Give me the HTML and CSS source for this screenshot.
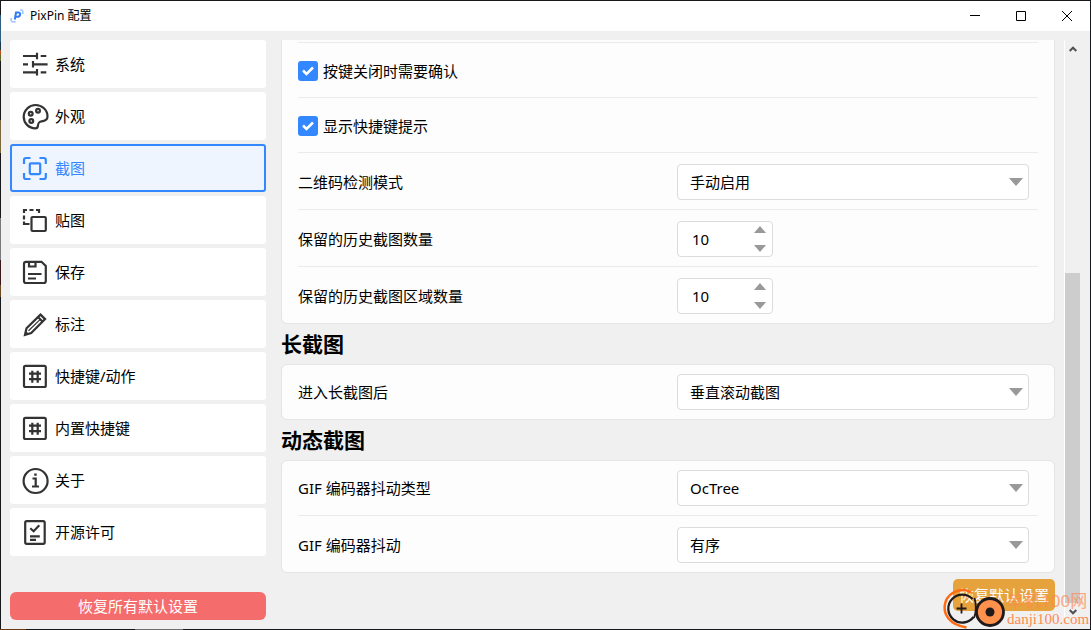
FILE: index.html
```html
<!DOCTYPE html>
<html lang="zh-CN">
<head>
<meta charset="utf-8">
<title>PixPin 配置</title>
<link rel="stylesheet" href="styles.css">
</head>
<body>
<div class="window">
  <header class="titlebar">
    <svg class="app-icon" viewBox="0 0 14 14" aria-hidden="true">
      <path d="M10 1.200h1.300q1.500 0 1.500 1.500v2.300M1.200 9v2.300q0 1.500 1.500 1.500h3" fill="none" stroke="#a9cbff" stroke-width="1.800"/>
      <path d="M4.800 10.500L6 3.500h2.200q2.300 0 1.900 2.200-.4 2-2.700 2H5.400" fill="none" stroke="#2f7df6" stroke-width="2"/>
    </svg>
    <span class="title">PixPin 配置</span>
    <div class="window-buttons">
      <button class="window-button" type="button" aria-label="最小化"><svg viewBox="0 0 12 12"><path d="M1 5.500h10"/></svg></button>
      <button class="window-button" type="button" aria-label="最大化"><svg viewBox="0 0 12 12"><path d="M1.500 1.500h9v9h-9z"/></svg></button>
      <button class="window-button" type="button" aria-label="关闭"><svg viewBox="0 0 12 12"><path d="M1 1l10 10M11 1L1 11"/></svg></button>
    </div>
  </header>

  <div class="body">
    <aside class="sidebar">
      <nav class="nav">
        <button class="nav-item" type="button">
          <svg class="icon" viewBox="0 0 24 24"><path d="M0 4h14M14 .7v6.600M17.700 4h5.600M0 12.300h5M10 9v6.600M10 12.300h14.600M0 20.300h14M14 17v6.600M17.700 20.300h5.600"/></svg>
          <span>系统</span>
        </button>
        <button class="nav-item" type="button">
          <svg class="icon" viewBox="0 0 24 24"><path d="M24.500 12.500C24.500 6 19 1 12.600 1S.7 6.300.7 12.700s5 11.600 11.700 11.600c1.800 0 2.300-.8 2.500-2.300.3-3.300.9-4.300 3.800-4.700 3.300-.4 5.800-1.200 5.800-4.800z"/><circle cx="7.700" cy="9.700" r="1.900"/><circle cx="15" cy="6.800" r="1.900"/><circle cx="8.300" cy="17" r="1.900"/></svg>
          <span>外观</span>
        </button>
        <button class="nav-item selected" type="button" aria-current="page">
          <svg class="icon" viewBox="0 0 24 24"><path d="M1 8V4q0-2 2-2h4.500M16.500 2h4.300q2 0 2 2v4M1 17v4q0 2 2 2h4.500M16.500 23h4.300q2 0 2-2v-4"/><rect x="6.800" y="7.300" width="10.400" height="10.800" rx="1"/></svg>
          <span>截图</span>
        </button>
        <button class="nav-item" type="button">
          <svg class="icon" viewBox="0 0 24 24"><path d="M1 5V2h3M6.500 2h4M13 2h3v3M1 7.500v4M1 13.500V16h5.500"/><rect x="8.500" y="9" width="14.300" height="14" rx="1"/></svg>
          <span>贴图</span>
        </button>
        <button class="nav-item" type="button">
          <svg class="icon" viewBox="0 0 24 24"><path d="M3 1.800h15.500l4.300 4.200v15q0 2-2 2H3q-2 0-2-2V3.800q0-2 2-2zM6 2v4.500h6.500V2M5 14h13.500M5 18.500h8"/></svg>
          <span>保存</span>
        </button>
        <button class="nav-item" type="button">
          <svg class="icon" viewBox="0 0 24 24"><path d="M2 22.800l1.500-6.500L17.500 2.600l4.600 4.500L8.200 21zM15 5l4.700 4.700"/><path class="thin" d="M5.500 18.800L17.300 7.400M3 20l2 2"/></svg>
          <span>标注</span>
        </button>
        <button class="nav-item" type="button">
          <svg class="icon" viewBox="0 0 24 24"><rect x="1" y="1.800" width="21.800" height="21.200" rx="1.500"/><path d="M9.300 6.700v12M14.700 6.700v12M6 9.700h12M6 15.200h12"/></svg>
          <span>快捷键/动作</span>
        </button>
        <button class="nav-item" type="button">
          <svg class="icon" viewBox="0 0 24 24"><rect x="1" y="1.800" width="21.800" height="21.200" rx="1.500"/><path d="M9.300 6.700v12M14.700 6.700v12M6 9.700h12M6 15.200h12"/></svg>
          <span>内置快捷键</span>
        </button>
        <button class="nav-item" type="button">
          <svg class="icon" viewBox="0 0 24 24"><circle cx="12.600" cy="13" r="12"/><path d="M9.500 10.500h3.200v8M9 18.500h7M11.200 6.700h2.500"/></svg>
          <span>关于</span>
        </button>
        <button class="nav-item" type="button">
          <svg class="icon" viewBox="0 0 24 24"><rect x="2.200" y="1.200" width="19.500" height="22.600" rx="1.500"/><path d="M7.300 8.300l3.300 3 5.700-6M7 16.300h9.800M7 19.800h6"/></svg>
          <span>开源许可</span>
        </button>
      </nav>
      <button class="reset-all" type="button">恢复所有默认设置</button>
    </aside>

    <main class="content">
      <section class="card card-continued">
        <div class="row">
          <label class="check"><input type="checkbox" checked><span>按键关闭时需要确认</span></label>
        </div>
        <div class="row">
          <label class="check"><input type="checkbox" checked><span>显示快捷键提示</span></label>
        </div>
        <div class="row">
          <label for="qr-mode">二维码检测模式</label>
          <select id="qr-mode"><option>手动启用</option></select>
        </div>
        <div class="row">
          <label for="history-count">保留的历史截图数量</label>
          <div class="spinner">
            <input id="history-count" type="number" value="10">
            <div class="steps">
              <button class="step up" type="button" aria-label="增加"></button>
              <button class="step down" type="button" aria-label="减少"></button>
            </div>
          </div>
        </div>
        <div class="row">
          <label for="region-count">保留的历史截图区域数量</label>
          <div class="spinner">
            <input id="region-count" type="number" value="10">
            <div class="steps">
              <button class="step up" type="button" aria-label="增加"></button>
              <button class="step down" type="button" aria-label="减少"></button>
            </div>
          </div>
        </div>
      </section>

      <h2>长截图</h2>
      <section class="card">
        <div class="row">
          <label for="long-mode">进入长截图后</label>
          <select id="long-mode"><option>垂直滚动截图</option></select>
        </div>
      </section>

      <h2>动态截图</h2>
      <section class="card">
        <div class="row">
          <label for="dither-type">GIF 编码器抖动类型</label>
          <select id="dither-type"><option>OcTree</option></select>
        </div>
        <div class="row">
          <label for="dither">GIF 编码器抖动</label>
          <select id="dither"><option>有序</option></select>
        </div>
      </section>
      <button class="reset-page" type="button">恢复默认设置</button>
    </main>

    <div class="scrollbar">
      <button class="scroll-button" type="button" aria-label="向上滚动"><svg viewBox="0 0 8 6"><path d="M.7 5L4 1.700 7.300 5"/></svg></button>
      <div class="track"><div class="thumb"></div></div>
      <button class="scroll-button" type="button" aria-label="向下滚动"><svg viewBox="0 0 8 6"><path d="M.7 1L4 4.300 7.300 1"/></svg></button>
    </div>
  </div>

  <div class="watermark">
    <svg viewBox="0 0 64 44" aria-hidden="true">
      <path d="M28 6.500C20 1 6 5 2.500 16c-3.500 12 4 23 21 25.500" fill="none" stroke="#ff6a13" stroke-width="2.500"/>
      <path d="M29.500 13A14 14 0 1 0 30.500 31" fill="none" stroke="#211a1b" stroke-width="2.300"/>
      <path d="M13.500 22.500h10M18.500 17.500v10" stroke="#211a1b" stroke-width="1.800"/>
      <circle cx="47" cy="26" r="13.500" fill="#ff914d" stroke="#211a1b" stroke-width="2.800"/>
      <circle cx="47" cy="26" r="4.500" fill="#211a1b"/>
      <path d="M31.500 12q3 11-.5 20" fill="none" stroke="#211a1b" stroke-width="1.800"/>
    </svg>
    <div class="watermark-text">
      <span class="watermark-name">单机100网</span>
      <span class="watermark-site">danji100.com</span>
    </div>
  </div>
</div>
</body>
</html>
```

FILE: styles.css
```css
* {
  box-sizing: border-box;
}

body {
  margin: 0;
  font: 15px/20px "Noto Sans", "Noto Sans CJK SC", sans-serif;
  color: #000;
  background:
    linear-gradient(90deg, #6b3a10 26px, #17181c 26px 135px, #6f6f6f 135px 183px, #17181c 183px) bottom / 100% 1px no-repeat,
    linear-gradient(#17181c 15px, #2f5f80 15px 42px, #1d3a4a 42px 50px, #a8541c 50px 55px, #5d6b25 55px 61px, #17181c 61px 120px, #7a6840 120px 153px, #17181c 153px 218px, #77797c 218px 260px, #3a1719 260px 285px, #6b4a22 285px 297px, #17181c 297px) left / 1px 100% no-repeat,
    #17181c;
}

button,
input,
select {
  margin: 0;
  padding: 0;
  border: 0;
  font: inherit;
  color: inherit;
  background: none;
}

.window {
  position: relative;
  display: flex;
  flex-direction: column;
  min-height: 100vh;
  border: 1px solid transparent;
}

.titlebar {
  display: flex;
  align-items: center;
  height: 30px;
  padding-left: 9px;
  background: #fff;
  font-size: 12px;
}

.app-icon {
  width: 14px;
  height: 14px;
  margin-right: 6px;
}

.window-buttons {
  display: flex;
  height: 100%;
  margin-left: auto;
}

.window-button {
  display: grid;
  place-items: center;
  width: 46px;
}

.window-button svg {
  width: 12px;
  height: 12px;
  fill: none;
  stroke: #000;
}

.body {
  flex: 1;
  display: flex;
  padding: 9px 10px 9px 9px;
  background: #f0f0f0;
}

.sidebar {
  display: flex;
  flex-direction: column;
  justify-content: space-between;
  width: 256px;
  margin-right: 15px;
}

.nav {
  display: flex;
  flex-direction: column;
  gap: 4px;
}

.nav-item {
  display: flex;
  align-items: center;
  gap: 8px;
  height: 48px;
  padding: 0 11px;
  border: 2px solid #fff;
  border-radius: 3px;
  background: #fff;
}

.nav-item.selected {
  border-color: #3388ff;
  background: #eef5ff;
  color: #3388ff;
}

.icon {
  width: 24px;
  height: 24px;
  overflow: visible;
  fill: none;
  stroke: #333;
  stroke-width: 2.2;
}

.icon .thin {
  stroke-width: 1.2;
}

.selected .icon {
  stroke: #3388ff;
}

.reset-all {
  height: 28px;
  border-radius: 6px;
  background: #f56c6c;
  color: #fff;
}

.content {
  flex: 1;
  display: flex;
  flex-direction: column;
}

.card {
  padding: 0 16px;
  border: 1px solid #e5e5e5;
  border-radius: 6px;
  background: #fdfdfd;
}

.card-continued {
  padding-top: 2px;
  border-top: 0;
  border-radius: 0 0 6px 6px;
}

.row {
  display: grid;
  grid-template-columns: minmax(0, 1fr) 352px;
  align-items: center;
  min-height: 54px;
  padding: 9px 9px 9px 0;
}

.card-continued .row,
.row + .row {
  min-height: 55px;
  padding-top: 11px;
  border-top: 1px solid #ebebeb;
}

.check {
  display: flex;
  align-items: center;
  gap: 5px;
}

.check input {
  appearance: none;
  width: 20px;
  height: 20px;
  border-radius: 3px;
  background: #3388ff url("data:image/svg+xml,%3Csvg xmlns='http://www.w3.org/2000/svg' viewBox='0 0 20 20'%3E%3Cpath d='M5 9.500l3.500 3.500L15 6.500' fill='none' stroke='white' stroke-width='2.500'/%3E%3C/svg%3E");
}

select {
  appearance: none;
  width: 100%;
  height: 36px;
  padding: 0 30px 0 12px;
  border: 1px solid #dcdcdc;
  border-radius: 4px;
  background: #fff url("data:image/svg+xml,%3Csvg xmlns='http://www.w3.org/2000/svg' viewBox='0 0 14 8'%3E%3Cpath d='M0 0h14L7 8z' fill='%23999'/%3E%3C/svg%3E") right 5px center / 14px 8px no-repeat;
}

.spinner {
  display: flex;
  width: 96px;
  height: 36px;
  border: 1px solid #dcdcdc;
  border-radius: 4px;
  background: #fff;
}

.spinner input {
  flex: 1;
  min-width: 0;
  padding-left: 14px;
  appearance: textfield;
}

.spinner input::-webkit-inner-spin-button {
  appearance: none;
}

.steps {
  display: flex;
  flex-direction: column;
  justify-content: space-between;
  width: 18px;
  padding: 4px 0;
}

.step {
  width: 12px;
  height: 7px;
  background: #999;
}

.up {
  clip-path: polygon(50% 0, 100% 100%, 0 100%);
}

.down {
  clip-path: polygon(0 0, 100% 0, 50% 100%);
}

h2 {
  margin: 0;
  font-size: 21px;
  line-height: 40px;
}

.reset-page {
  align-self: flex-end;
  width: 102px;
  height: 32px;
  margin-top: 6px;
  border-radius: 5px;
  background: #e6a23c;
  color: #fff;
}

.scrollbar {
  display: flex;
  flex-direction: column;
  width: 16px;
  margin-left: 9px;
  border-left: 1px solid #fff;
}

.scroll-button {
  display: grid;
  place-items: center;
  height: 17px;
}

.scroll-button svg {
  width: 8px;
  height: 6px;
  fill: none;
  stroke: #505050;
  stroke-width: 2;
}

.track {
  flex: 1;
  display: flex;
  flex-direction: column;
  justify-content: flex-end;
}

.thumb {
  height: 60.4%;
  background: #cdcdcd;
}

.watermark {
  position: absolute;
  right: 0;
  bottom: -1px;
  display: flex;
  pointer-events: none;
}

.watermark svg {
  width: 64px;
  height: 44px;
}

.watermark-text {
  display: flex;
  flex-direction: column;
  justify-content: flex-end;
  width: 83px;
  padding-bottom: 2px;
  color: #ff8a50;
}

.watermark-name {
  font-size: 17px;
  line-height: 18px;
  opacity: 0.7;
}

.watermark-site {
  font: 15px/18px "Liberation Serif", serif;
}
```
